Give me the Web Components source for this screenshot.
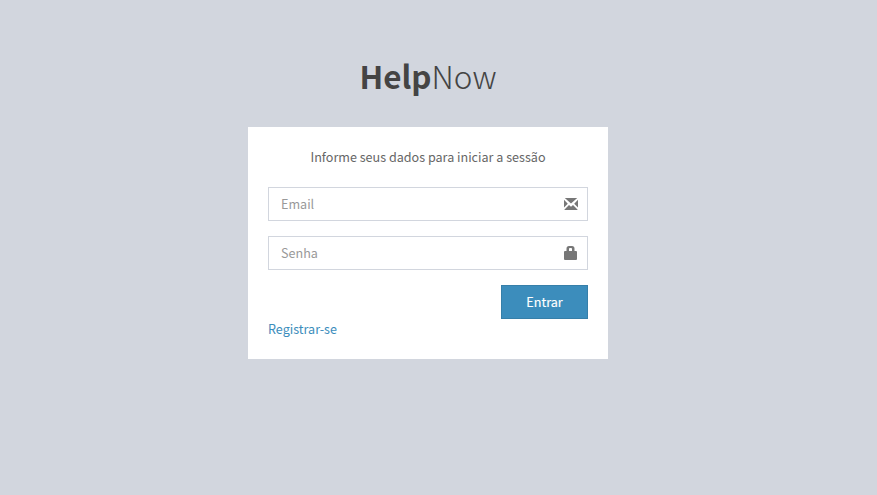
<!DOCTYPE html>
<html lang="pt-BR">
<head>
<meta charset="utf-8">
<title>HelpNow</title>
<style>
html, body { margin: 0; height: 100%; background: #d2d6de; }
body { overflow: hidden; font-family: "Source Sans Pro", "Noto Sans CJK JP", "Noto Sans", sans-serif; font-size: 12.58px; color: #666; }
</style>
</head>
<body>
<login-page></login-page>
<script>
class Base extends HTMLElement {
  connectedCallback() {
    if (!this.shadowRoot) this.attachShadow({ mode: "open" }).innerHTML = this.view();
  }
}
customElements.define("brand-logo", class extends Base {
  view() {
    return `<style>
      :host { display: block; text-align: center; font-size: 31.4px; line-height: 50px; height: 50px; font-weight: 300; color: #444; white-space: nowrap; }
      b { font-weight: 700; }
    </style><b><slot name="strong"></slot></b><slot></slot>`;
  }
});
const icons = {
  envelope: '<path d="M.8 1H13.200L7 6.600ZM0 2.800L3.800 6.800L0 10.600ZM14 2.800V10.600L10.200 6.800ZM5 8L7 9.800L9 8L13.500 12.500V13H.5V12.500Z"/>',
  lock: '<path fill-rule="evenodd" d="M2.500 5V2.500Q2.500 0 5 0H8Q10.500 0 10.500 2.500V5H12Q13 5 13 6V13Q13 14 12 14H1Q0 14 0 13V6Q0 5 1 5ZM5 5H8V3Q8 2 7.200 2H5.800Q5 2 5 3Z"/>'
};
customElements.define("text-field", class extends Base {
  view() {
    return `<style>
      :host { display: flex; align-items: center; justify-content: space-between; box-sizing: border-box; height: 34px; padding: 0 9px 0 12px; border: 1px solid #d2d6de; background: #fff; color: #999; line-height: 20px; }
      svg { width: 14px; height: 14px; fill: #777; }
    </style><span><slot></slot></span><svg viewBox="0 0 14 14">${icons[this.getAttribute("icon")]}</svg>`;
  }
});
customElements.define("primary-button", class extends Base {
  view() {
    return `<style>
      :host { display: block; }
      button { display: block; box-sizing: border-box; width: 87px; height: 34px; padding: 0; border: 1px solid #367fa9; background: #3c8dbc; color: #fff; font: inherit; font-weight: 400; font-size: 12.6px; line-height: 20px; -webkit-text-stroke: .15px #fff; }
    </style><button><slot></slot></button>`;
  }
});
customElements.define("text-link", class extends Base {
  view() {
    return `<style>
      :host { display: block; line-height: 20px; }
      a { color: #3c8dbc; text-decoration: none; }
    </style><a href="#"><slot></slot></a>`;
  }
});
customElements.define("login-card", class extends Base {
  view() {
    return `<style>
      :host { display: block; box-sizing: border-box; height: 232px; padding: 20px; background: #fff; }
      p { margin: 0 0 20px; line-height: 20px; text-align: center; }
      .fields { display: grid; gap: 15px; }
      .actions { display: flex; justify-content: flex-end; margin-top: 15px; }
    </style><p><slot></slot></p><div class="fields"><slot name="field"></slot></div>
    <div class="actions"><slot name="action"></slot></div><slot name="link"></slot>`;
  }
});
customElements.define("login-page", class extends Base {
  view() {
    return `<style>
      :host { display: block; box-sizing: border-box; padding: 51px 21px 0 0; }
      main { width: 360px; margin: 0 auto; display: grid; gap: 26px; }
    </style><main>
      <brand-logo><span slot="strong">Help</span>Now</brand-logo>
      <login-card>Informe seus dados para iniciar a sessão
        <text-field slot="field" icon="envelope">Email</text-field>
        <text-field slot="field" icon="lock">Senha</text-field>
        <primary-button slot="action">Entrar</primary-button>
        <text-link slot="link">Registrar-se</text-link>
      </login-card></main>`;
  }
});
</script>
</body>
</html>
